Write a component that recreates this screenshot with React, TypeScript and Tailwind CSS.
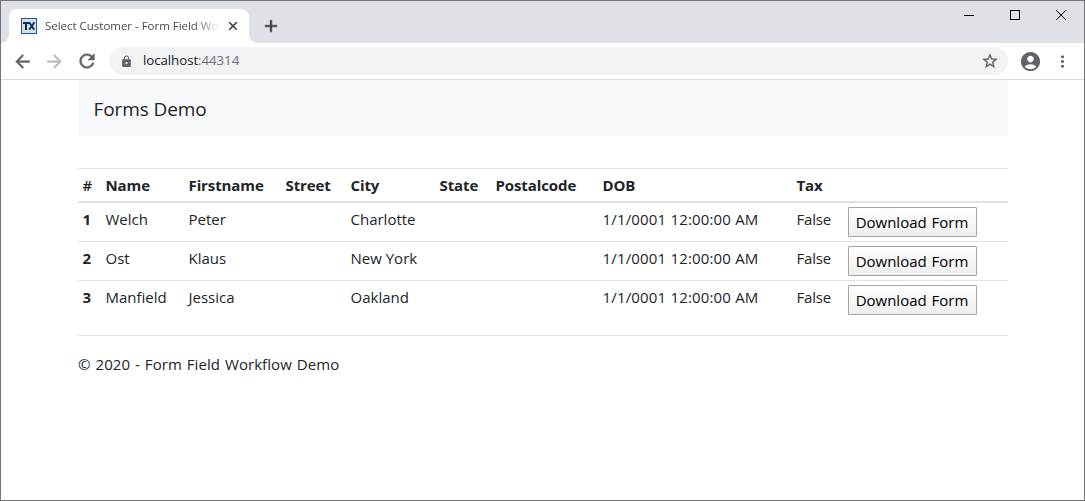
import {
    MdAccountCircle,
    MdAdd,
    MdArrowBack,
    MdArrowForward,
    MdClose,
    MdLock,
    MdMoreVert,
    MdRefresh,
    MdStarBorder
} from 'react-icons/md'

type Customer = {
    id: number
    name: string
    firstname: string
    street: string
    city: string
    state: string
    postalcode: string
    dob: string
    tax: string
}

const customers: Customer[] = [
    { id: 1, name: 'Welch', firstname: 'Peter', street: '', city: 'Charlotte', state: '', postalcode: '', dob: '1/1/0001 12:00:00 AM', tax: 'False' },
    { id: 2, name: 'Ost', firstname: 'Klaus', street: '', city: 'New York', state: '', postalcode: '', dob: '1/1/0001 12:00:00 AM', tax: 'False' },
    { id: 3, name: 'Manfield', firstname: 'Jessica', street: '', city: 'Oakland', state: '', postalcode: '', dob: '1/1/0001 12:00:00 AM', tax: 'False' }
]

const columns = [
    { label: '#', width: 'w-[23px]' },
    { label: 'Name', width: 'w-[83px]' },
    { label: 'Firstname', width: 'w-[97px]' },
    { label: 'Street', width: 'w-[65px]' },
    { label: 'City', width: 'w-[89px]' },
    { label: 'State', width: 'w-[56px]' },
    { label: 'Postalcode', width: 'w-[107px]' },
    { label: 'DOB', width: 'w-[194px]' },
    { label: 'Tax', width: 'w-[51px]' },
    { label: '', width: 'w-[165px]' }
]

function TabStrip() {
    return (
        <div className="flex h-[42px] bg-[#dee1e6]">
            <div className="h-2 w-2 self-end bg-[radial-gradient(circle_at_top_left,transparent_7.5px,white_8px)]" />
            <div className="mt-2 flex h-[34px] w-[240px] items-center rounded-t-lg bg-white pl-3">
                <svg className="h-4 w-4 shrink-0" viewBox="0 0 16 16">
                    <rect x="0.5" y="0.5" width="15" height="15" fill="#d3dfec" stroke="#2b5a8a" />
                    <path d="M2 5h6.5M5 5v7" fill="none" stroke="#0b2c54" strokeWidth="2" />
                    <path d="M8.2 4.3l5 7.4M13.4 4.3l-5.2 7.4" fill="none" stroke="#0b2c54" strokeWidth="1.9" />
                </svg>
                <div className="ml-2 w-[176px] whitespace-nowrap text-[11.5px] tracking-[-0.02px] text-[#45494d] [mask-image:linear-gradient(to_right,black_150px,transparent)]">
                    Select Customer - Form Field Wo
                </div>
                <MdClose className="ml-[5px] shrink-0 text-[#3c4043] [&>path:last-child]:stroke-1" size={14} />
            </div>
            <div className="h-2 w-2 self-end bg-[radial-gradient(circle_at_top_right,transparent_7.5px,white_8px)]" />
            <MdAdd className="ml-1 mt-[15px] text-[#3c4043] [&>path:last-child]:stroke-[0.6]" size={20} />
            <div className="ml-auto flex items-start pr-[17px] pt-[9px]">
                <svg className="h-[11px] w-[11px]" viewBox="0 0 11 11" shapeRendering="crispEdges">
                    <path d="M0 5.5h10" stroke="#000" />
                </svg>
                <svg className="ml-[35px] h-[11px] w-[11px]" viewBox="0 0 11 11" shapeRendering="crispEdges">
                    <rect x="0.5" y="0.5" width="9" height="9" fill="none" stroke="#000" />
                </svg>
                <svg className="ml-[35px] h-[11px] w-[11px]" viewBox="0 0 11 11">
                    <path d="M0.3 0.3l9.6 9.6M9.9 0.3l-9.6 9.6" stroke="#000" />
                </svg>
            </div>
        </div>
    )
}

function Toolbar() {
    return (
        <div className="flex h-[37px] items-center border-b border-[#dadce0] bg-white pl-[11px] text-[#5f6368]">
            <MdArrowBack className="[&>path:last-child]:stroke-[0.5]" size={21} />
            <MdArrowForward className="ml-[11px] text-[#babcbe] [&>path:last-child]:stroke-[0.5]" size={21} />
            <MdRefresh className="ml-[11px] [&>path:last-child]:stroke-[0.5]" size={22} />
            <div className="ml-[11px] flex h-7 w-[899px] items-center rounded-full bg-[#f1f3f4] pl-[11px]">
                <MdLock size={13} />
                <span className="ml-[10px] text-[13.3px] tracking-[-0.07px] text-[#202124]">
                    localhost<span className="text-[#6b6f73]">:44314</span>
                </span>
                <MdStarBorder className="ml-auto mr-[9px] [&>path:last-child]:stroke-[0.4]" size={18} />
            </div>
            <MdAccountCircle className="ml-[11px]" size={23} />
            <MdMoreVert className="ml-[11px]" size={19} />
        </div>
    )
}

function CustomerTable() {
    return (
        <table className="mt-8 w-[930px] table-fixed border-separate border-spacing-0 text-left">
            <thead>
                <tr className="h-[35px]">
                    {columns.map((column, i) => (
                        <th
                            key={i}
                            className={`${column.width} whitespace-nowrap border-b-2 border-t border-[#dee2e6] px-[4.5px] py-0 font-bold tracking-[-0.1px] first:font-semibold`}
                        >
                            {column.label}
                        </th>
                    ))}
                </tr>
            </thead>
            <tbody className="[&>tr+tr>*]:border-t [&>tr>*]:border-[#dee2e6] [&>tr>*]:px-[4.5px] [&>tr>*]:pb-0 [&>tr>*]:pt-1 [&>tr>*]:align-top [&>tr>*]:whitespace-nowrap">
                {customers.map((customer) => (
                    <tr key={customer.id} className="h-[39px] first:h-[38px]">
                        <th className="font-bold">{customer.id}</th>
                        <td>{customer.name}</td>
                        <td>{customer.firstname}</td>
                        <td>{customer.street}</td>
                        <td>{customer.city}</td>
                        <td>{customer.state}</td>
                        <td>{customer.postalcode}</td>
                        <td className="tracking-[0.17px]">{customer.dob}</td>
                        <td className="tracking-[-0.2px]">{customer.tax}</td>
                        <td>
                            <button className="block h-[30px] w-[129px] rounded-[1px] border border-[#a6a6a6] bg-linear-to-b from-white to-[#eeeeee] text-black [word-spacing:1px]">
                                Download Form
                            </button>
                        </td>
                    </tr>
                ))}
            </tbody>
        </table>
    )
}

export default function App() {
    return (
        <div className="h-[501px] w-[1085px] overflow-hidden border border-[#737475] bg-white font-['Open_Sans','Noto_Sans',sans-serif]">
            <TabStrip />
            <Toolbar />
            <main className="ml-[77px] w-[930px] text-[15px] leading-6 text-[#212529]">
                <nav className="flex h-14 items-center bg-[#f8f9fa] pl-[15.5px] pt-0.5 text-[19px] tracking-[-0.1px]">Forms Demo</nav>
                <CustomerTable />
                <footer className="mt-4 border-t border-[#e0e2e4] pt-4 tracking-[0.06px] [word-spacing:1px]">
                    &copy; 2020 - Form Field Workflow Demo
                </footer>
            </main>
        </div>
    )
}
